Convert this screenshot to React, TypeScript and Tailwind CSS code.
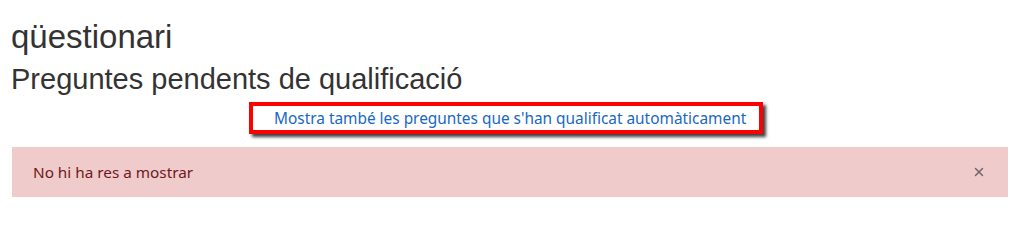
import { X } from "lucide-react";

const App = () => {
  return (
    <div className="w-[1012px] h-[204px] bg-white overflow-hidden">
      <div className="pl-[11px] pr-[4px] pt-[17px]">
        <h2 className="font-['Liberation_Sans',Arial,sans-serif] text-[33px] leading-[1.2] text-[#333333]">
          qüestionari
        </h2>
        <h3 className="mt-[5px] font-['Liberation_Sans',Arial,sans-serif] text-[29px] leading-[1.2] text-[#333333]">
          Preguntes pendents de qualificació
        </h3>
        <div className="mt-[6px] flex justify-center pr-[7px]">
          <div className="w-[514px] h-[32px] border-[4px] border-[#ff0000] bg-white shadow-[3px_3px_3px_rgba(0,0,0,0.75)] flex items-center pl-[21px]">
            <a
              href="#"
              className="font-['Noto_Sans',sans-serif] text-[15.4px] text-[#1767c4] leading-none whitespace-nowrap"
            >
              Mostra també les preguntes que s'han qualificat automàticament
            </a>
          </div>
        </div>
        <div className="mt-[13px] ml-[1px] h-[50px] bg-[#f0cbcb] flex items-center justify-between pl-[21px] pr-[22px]">
          <p className="font-['Noto_Sans',sans-serif] text-[15.3px] text-[#6e1a1a]">
            No hi ha res a mostrar
          </p>
          <button className="text-[#6f6666]">
            <X size={14} strokeWidth={2.5} />
          </button>
        </div>
      </div>
    </div>
  );
};

export default App;
